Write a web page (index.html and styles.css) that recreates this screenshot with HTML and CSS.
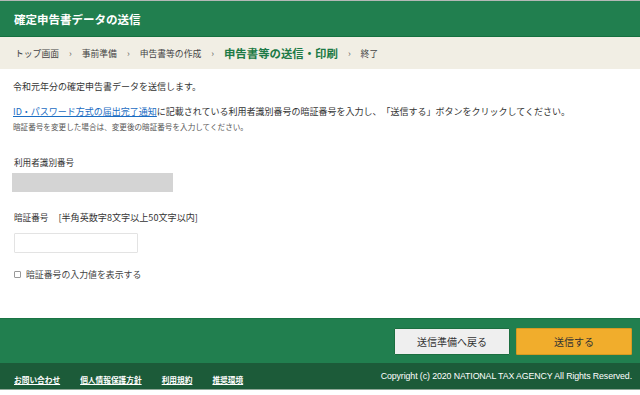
FILE: index.html
```html
<!DOCTYPE html>
<html lang="ja">
<head>
  <meta charset="UTF-8">
  <meta name="viewport" content="width=device-width, initial-scale=1.0">
  <title>確定申告書データの送信</title>
  <link rel="stylesheet" href="styles.css">
</head>
<body>

  <header class="cabecera">
    <h1>確定申告書データの送信</h1>
  </header>

  <nav class="migas">
    <span>トップ画面</span>
    <span class="sep">›</span>
    <span>事前準備</span>
    <span class="sep">›</span>
    <span>申告書等の作成</span>
    <span class="sep">›</span>
    <span class="actual">申告書等の送信・印刷</span>
    <span class="sep">›</span>
    <span>終了</span>
  </nav>

  <main class="contenido">
    <p class="intro">令和元年分の確定申告書データを送信します。</p>

    <p class="instruccion"><a href="#">ID・パスワード方式の届出完了通知</a>に記載されている利用者識別番号の暗証番号を入力し、「送信する」ボタンをクリックしてください。</p>
    <p class="nota">暗証番号を変更した場合は、変更後の暗証番号を入力してください。</p>

    <div class="campo">
      <label class="etiqueta">利用者識別番号</label>
      <div class="valor-fijo"></div>
    </div>

    <div class="campo campo-clave">
      <label class="etiqueta" for="clave">暗証番号<span class="regla">[半角英数字8文字以上50文字以内]</span></label>
      <input type="password" id="clave" class="entrada">
    </div>

    <label class="mostrar"><input type="checkbox"><span>暗証番号の入力値を表示する</span></label>
  </main>

  <footer class="pie">
    <div class="acciones">
      <button class="btn btn-volver">送信準備へ戻る</button>
      <button class="btn btn-enviar">送信する</button>
    </div>
    <div class="pie-inferior">
      <ul class="enlaces">
        <li><a href="#">お問い合わせ</a></li>
        <li><a href="#">個人情報保護方針</a></li>
        <li><a href="#">利用規約</a></li>
        <li><a href="#">推奨環境</a></li>
      </ul>
      <p class="copyright">Copyright (c) 2020 NATIONAL TAX AGENCY All Rights Reserved.</p>
    </div>
  </footer>

</body>
</html>
```

FILE: styles.css
```css
* { box-sizing: border-box; }

body {
  margin: 0;
  height: 395px;
  display: flex;
  flex-direction: column;
  font-family: "Noto Sans CJK JP", "Noto Sans", sans-serif;
  color: #333;
  background: #fff;
  text-spacing-trim: space-all;
}

p { margin: 0; }

.cabecera {
  border-top: 1px solid #b4b8b6;
  border-bottom: 1px solid #15703f;
  background: #217f4f;
  height: 37px;
  display: flex;
  align-items: center;
  padding: 0 14px;
}

.cabecera h1 {
  margin: 0;
  font-size: 11.5px;
  font-weight: bold;
  color: #fff;
}

.migas {
  background: #f1eee4;
  height: 32px;
  display: flex;
  align-items: center;
  padding: 0 15px;
  font-size: 8.8px;
  color: #444;
}

.migas .sep {
  margin: 0 10px;
  color: #666;
  font-size: 9px;
}

.migas .actual {
  font-size: 11.4px;
  font-weight: bold;
  color: #1d7a46;
}

.contenido {
  flex: 1;
  padding: 12px 13px 0;
  font-size: 9px;
  color: #333;
}

.intro {
  line-height: 12px;
}

.instruccion {
  margin-top: 13px;
  line-height: 12px;
}

.instruccion a {
  color: #1a6cc2;
}

.nota {
  margin-top: 4px;
  font-size: 7.6px;
  color: #555;
  line-height: 10px;
}

.campo {
  margin-top: 25px;
}

.etiqueta {
  display: block;
  font-size: 8.6px;
  line-height: 11px;
  padding-left: 1px;
}

.regla {
  margin-left: 10px;
  font-size: 9.1px;
}

.valor-fijo {
  margin-top: 5px;
  margin-left: -1px;
  width: 161px;
  height: 19px;
  background: #d4d4d4;
}

.campo-clave {
  margin-top: 20px;
}

.entrada {
  display: block;
  margin-top: 10px;
  margin-left: 1px;
  width: 124px;
  height: 20px;
  border: 1px solid #e3e3e3;
  border-radius: 1px;
  padding: 0 4px;
}

.mostrar {
  display: flex;
  align-items: center;
  margin-top: 15px;
  margin-left: 1px;
  font-size: 8.9px;
  color: #444;
}

.mostrar input {
  appearance: none;
  margin: 0 5px 0 0;
  width: 7px;
  height: 7px;
  border: 1px solid #999;
  border-radius: 1px;
  background: #fff;
}

.pie {
  margin-bottom: 5px;
}

.acciones {
  background: #217f4f;
  border-top: 1px solid #1a7444;
  height: 45px;
  display: flex;
  justify-content: flex-end;
  align-items: center;
  gap: 6px;
  padding: 0 8px;
}

.btn {
  width: 116px;
  height: 27px;
  border-radius: 1px;
  font-family: "Noto Sans CJK JP", sans-serif;
  font-size: 10px;
  color: #333;
  cursor: pointer;
}

.btn-volver {
  background: #efefef;
  border: 1px solid #1c6e40;
}

.btn-enviar {
  background: #f1ad2c;
  border: 1px solid #d69a22;
}

.pie-inferior {
  background: #1c5b39;
  height: 27px;
  display: flex;
  align-items: center;
  justify-content: space-between;
  padding: 0 8px 0 14px;
  border-bottom: 1px solid #8fa898;
}

.enlaces {
  list-style: none;
  margin: 0;
  padding: 0;
  display: flex;
  gap: 20px;
}

.enlaces a {
  color: #fff;
  font-size: 7.7px;
  font-weight: bold;
}

.copyright {
  color: #fff;
  font-family: "Liberation Sans", Arial, sans-serif;
  font-size: 8.8px;
  letter-spacing: -0.1px;
}
```
